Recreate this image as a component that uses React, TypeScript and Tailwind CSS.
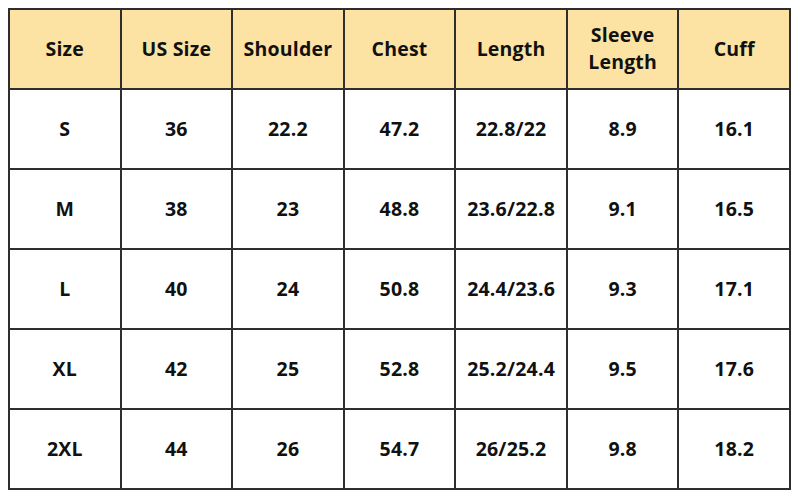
import React from "react";

const headers: string[][] = [["Size"], ["US Size"], ["Shoulder"], ["Chest"], ["Length"], ["Sleeve", "Length"], ["Cuff"]];
const rows: string[][] = [
  ["S", "36", "22.2", "47.2", "22.8/22", "8.9", "16.1"],
  ["M", "38", "23", "48.8", "23.6/22.8", "9.1", "16.5"],
  ["L", "40", "24", "50.8", "24.4/23.6", "9.3", "17.1"],
  ["XL", "42", "25", "52.8", "25.2/24.4", "9.5", "17.6"],
  ["2XL", "44", "26", "54.7", "26/25.2", "9.8", "18.2"],
];

export default function App() {
  return (
    <div className="w-[800px] h-[500px] bg-white p-2" style={{ fontFamily: '"Open Sans", "Liberation Sans", sans-serif' }}>
      <div className="w-[783px] h-[482px] bg-[#2e2e2e] p-[2px] grid grid-cols-7 grid-rows-6 gap-[2px] text-[19.5px] font-bold text-[#111111] tracking-[0.2px]">
        {headers.map((h, i) => (
          <div key={i} className="bg-[#fde3a3] flex flex-col items-center justify-center leading-[27px] pb-[2px]">
            {h.map((line, j) => (
              <span key={j}>{line}</span>
            ))}
          </div>
        ))}
        {rows.flatMap((r, ri) =>
          r.map((c, ci) => (
            <div key={`${ri}-${ci}`} className="bg-white flex items-center justify-center">
              {c}
            </div>
          ))
        )}
      </div>
    </div>
  );
}
